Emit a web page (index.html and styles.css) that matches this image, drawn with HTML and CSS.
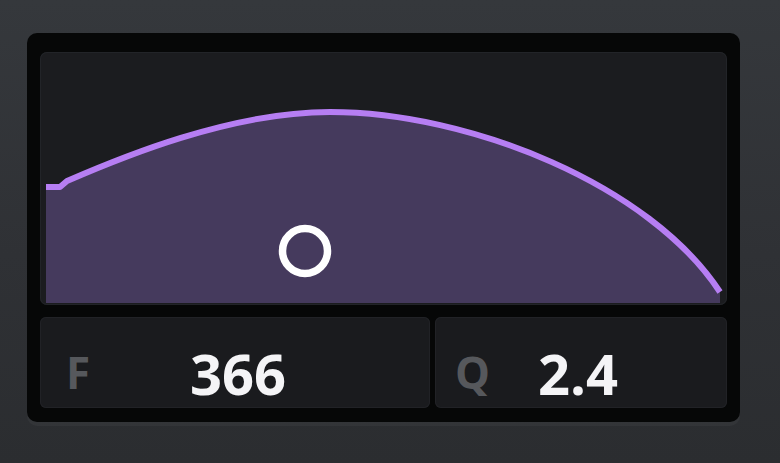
FILE: index.html
```html
<!DOCTYPE html>
<html>
<head>
<meta charset="utf-8">
<link rel="stylesheet" href="styles.css">
</head>
<body>
<div class="panel">
  <div class="graph">
    <svg class="graph-svg" viewBox="40 52 687 253" width="687" height="253">
      <path class="fill" d="M46,187 L60,187 L67,181 C120,158 230,112 330,112 C470,112 650,185 720,292 L720,303 L46,303 Z"/>
      <path class="line" d="M46,187 L60,187 L67,181 C120,158 230,112 330,112 C470,112 650,185 720,292"/>
      <circle class="handle" cx="305" cy="251" r="22.5"/>
    </svg>
  </div>
  <div class="params">
    <div class="param param-f">
      <span class="label">F</span>
      <span class="value">366</span>
    </div>
    <div class="param param-q">
      <span class="label">Q</span>
      <span class="value">2.4</span>
    </div>
  </div>
</div>
</body>
</html>
```
FILE: styles.css
```css
html, body {
  margin: 0;
  padding: 0;
}
body {
  width: 780px;
  height: 463px;
  overflow: hidden;
  background: linear-gradient(180deg, #35383c 0%, #2f3135 55%, #2b2d30 100%);
  font-family: "Open Sans", "DejaVu Sans", sans-serif;
  padding-top: 33px;
  box-sizing: border-box;
}
.panel {
  margin-left: 27px;
  width: 713px;
  height: 389px;
  box-sizing: border-box;
  padding: 19px 13px 14px 13px;
  background: #060707;
  border-radius: 10px;
  display: flex;
  flex-direction: column;
  gap: 12px;
  box-shadow: 0 4px 0 rgba(255, 255, 255, 0.035);
}
.graph {
  width: 687px;
  height: 253px;
  background: #1b1c1f;
  border-radius: 7px;
  overflow: hidden;
  box-shadow: inset 0 0 0 1px #222428;
}
.graph-svg {
  display: block;
}
.fill {
  fill: #453a5d;
}
.line {
  fill: none;
  stroke: #b67ef3;
  stroke-width: 6;
  stroke-linejoin: round;
}
.handle {
  fill: none;
  stroke: #ffffff;
  stroke-width: 7.5;
}
.params {
  display: grid;
  grid-template-columns: 390px 292px;
  gap: 5px;
  height: 91px;
}
.param {
  display: grid;
  grid-template-columns: 1fr auto 1fr;
  align-items: end;
  background: #1a1b1e;
  border-radius: 6px;
  box-shadow: inset 0 0 0 1px #212226;
  padding: 0 0 7px 0;
  box-sizing: border-box;
}
.label {
  justify-self: start;
  font-size: 44px;
  line-height: 44px;
  font-weight: 700;
  color: #56585c;
  margin-bottom: 7px;
}
.param-f .label {
  margin-left: 26px;
}
.param-q .label {
  margin-left: 20px;
}
.value {
  font-size: 56px;
  line-height: 56px;
  font-weight: 700;
  color: #f4f4f6;
}
.param-f .value {
  margin-left: 6px;
}
.param-q .value {
  margin-right: 6px;
}
```
